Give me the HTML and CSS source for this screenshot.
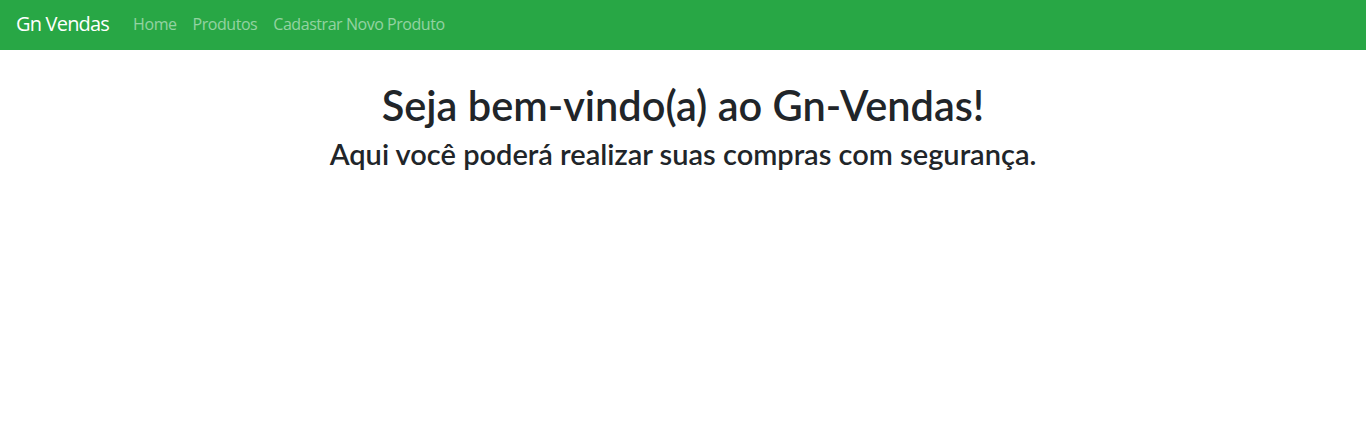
FILE: index.html
```html
<!DOCTYPE html>
<html lang="pt-BR">
<head>
<meta charset="utf-8">
<title>Gn Vendas</title>
<link rel="stylesheet" href="styles.css">
</head>
<body>
<nav class="navbar">
  <a class="brand" href="#">Gn Vendas</a>
  <ul class="nav">
    <li><a class="nav-link" href="#">Home</a></li>
    <li><a class="nav-link" href="#">Produtos</a></li>
    <li><a class="nav-link" href="#">Cadastrar Novo Produto</a></li>
  </ul>
</nav>
<main class="container">
  <h1 class="title">Seja bem-vindo(a) ao Gn-Vendas!</h1>
  <h2 class="subtitle">Aqui você poderá realizar suas compras com segurança.</h2>
</main>
</body>
</html>
```
FILE: styles.css
```css
* { box-sizing: border-box; }
html, body {
  margin: 0;
  background: #fff;
  font-family: "Open Sans", "Noto Sans", sans-serif;
  color: #212529;
}
.navbar {
  display: flex;
  align-items: center;
  height: 50px;
  padding: 0 16px 2px;
  background: #28a745;
  letter-spacing: -0.45px;
}
.brand {
  font-size: 20px;
  color: #fff;
  text-decoration: none;
  margin-right: 16px;
  line-height: 30px;
  letter-spacing: -0.8px;
}
.nav {
  display: flex;
  list-style: none;
  margin: 0;
  padding: 0;
}
.nav-link {
  display: block;
  padding: 0 8px;
  font-size: 16px;
  line-height: 24px;
  color: rgba(255, 255, 255, 0.5);
  text-decoration: none;
}
.container {
  display: flex;
  flex-direction: column;
  align-items: center;
  padding-top: 31px;
  font-family: Lato, "Open Sans", sans-serif;
}
.title {
  margin: 0 0 6px;
  font-size: 41.5px;
  font-weight: 600;
  line-height: 1.2;
}
.subtitle {
  margin: 0;
  font-size: 29px;
  font-weight: 600;
  line-height: 1.2;
}
```
